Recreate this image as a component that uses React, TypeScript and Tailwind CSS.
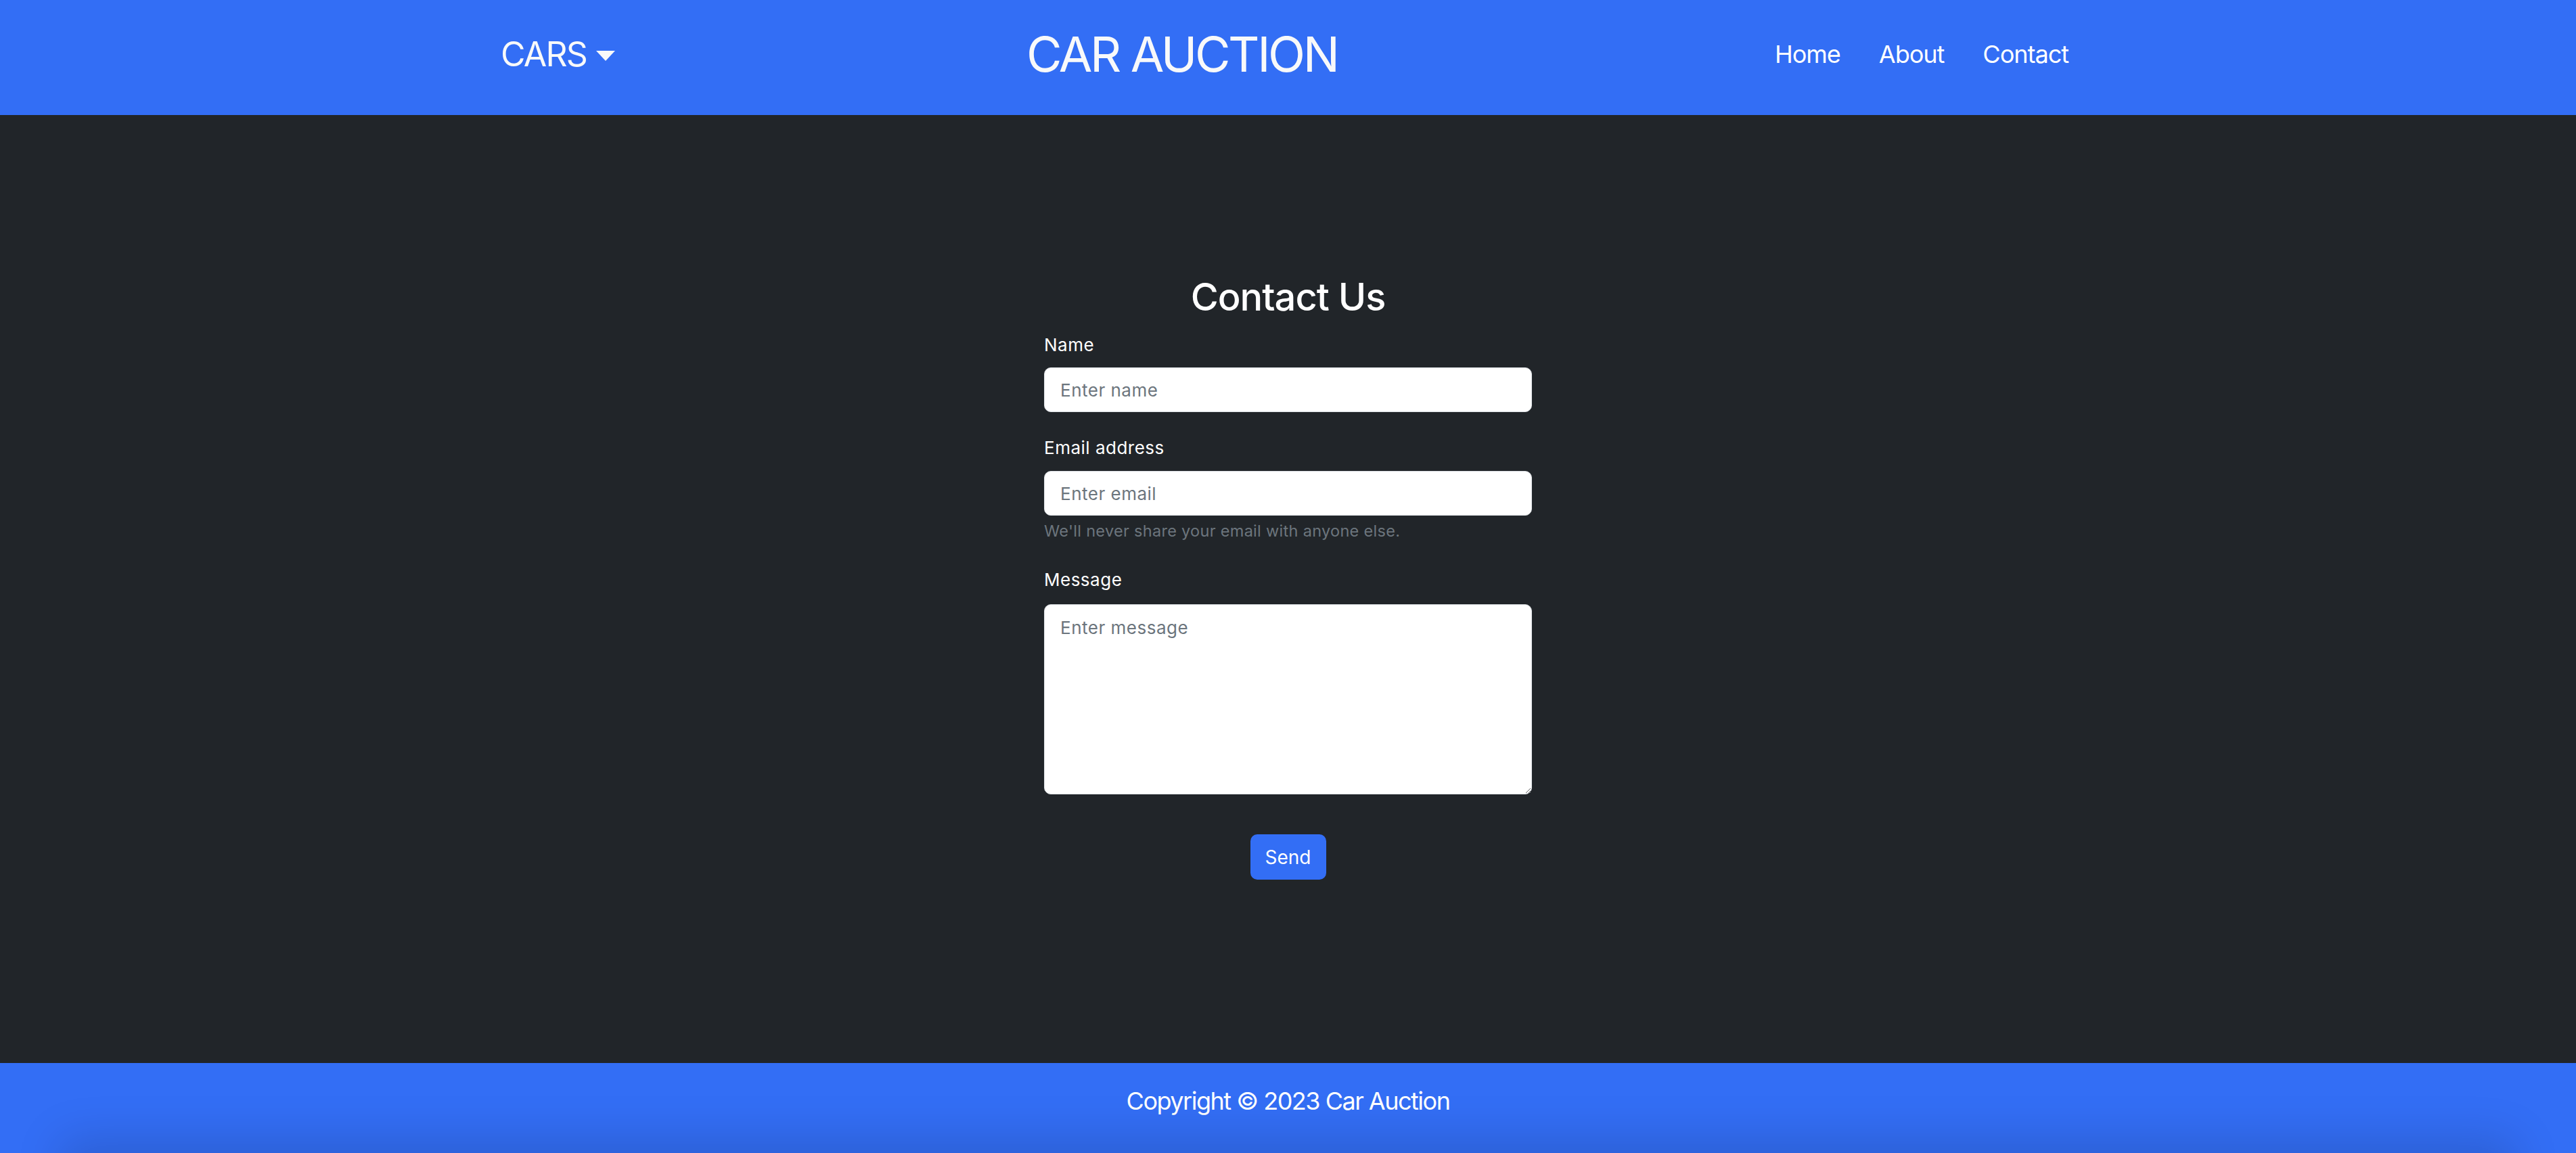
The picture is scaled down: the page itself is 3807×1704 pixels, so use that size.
import React from "react";

export default function App() {
  return (
    <div className="min-h-screen flex flex-col bg-[#212529] font-['Inter','Noto_Sans',sans-serif] text-white">
      <header className="h-[170px] shrink-0 bg-[#336ef5]">
        <div className="w-[2327px] mx-auto h-full flex items-center pr-[10px] pb-[10px]">
          <div className="w-[777px] flex items-center">
            <span className="text-[50px] leading-[60px] text-[#f8f9fa] tracking-[-1.8px]">CARS</span>
            <span className="ml-[14px] mt-[4px] w-0 h-0 border-l-[14.5px] border-r-[14.5px] border-t-[15px] border-l-transparent border-r-transparent border-t-[#f8f9fa]" />
          </div>
          <div className="text-[72px] leading-[86px] text-[#f8f9fa] tracking-[-3.4px]">CAR AUCTION</div>
          <nav className="ml-auto flex items-center gap-[57px] text-[36px] leading-[58px] text-white tracking-[-1px]">
            <a>Home</a>
            <a>About</a>
            <a>Contact</a>
          </nav>
        </div>
      </header>

      <main className="flex-1 flex flex-col items-center pt-[234px]">
        <form className="w-[721px] flex flex-col">
          <h4 className="text-center text-[56px] leading-[70px] font-medium mb-[16px] tracking-[-1px]">Contact Us</h4>

          <label className="text-[26px] leading-[39px] mb-[14px] tracking-[0.5px]">Name</label>
          <input
            type="text"
            placeholder="Enter name"
            className="h-[66px] w-full rounded-[10px] border border-[#dee2e6] bg-white px-[23px] text-[26px] tracking-[0.5px] text-[#212529] placeholder:text-[#6c757d] outline-none"
          />

          <label className="text-[26px] leading-[39px] mt-[33px] mb-[15px] tracking-[0.5px]">Email address</label>
          <input
            type="email"
            placeholder="Enter email"
            className="h-[66px] w-full rounded-[10px] border border-[#dee2e6] bg-white px-[23px] text-[26px] tracking-[0.5px] text-[#212529] placeholder:text-[#6c757d] outline-none"
          />
          <div className="text-[23.5px] leading-[31px] mt-[7px] text-[#6c757d] tracking-[0.3px]">We'll never share your email with anyone else.</div>

          <label className="text-[26px] leading-[39px] mt-[37px] mb-[17px] tracking-[0.5px]">Message</label>
          <textarea
            placeholder="Enter message"
            className="h-[281px] w-full rounded-[10px] border border-[#dee2e6] bg-white px-[23px] py-[14px] text-[26px] leading-[39px] tracking-[0.5px] text-[#212529] placeholder:text-[#6c757d] outline-none"
          />

          <div className="flex justify-center mt-[59px]">
            <button
              type="button"
              className="w-[112px] h-[67px] rounded-[10px] bg-[#336ef5] text-white text-[28px] leading-[40px]"
            >
              Send
            </button>
          </div>
        </form>
      </main>

      <footer className="relative h-[133px] shrink-0 overflow-hidden bg-[#336ef5] text-center pt-[27px]">
        <p className="text-[36px] leading-[58px] text-white tracking-[-1.5px]">Copyright © 2023 Car Auction</p>
        <div className="absolute left-[110px] right-[110px] top-[133px] h-[120px] shadow-[0_0_70px_20px_rgba(0,0,0,0.14)]" />
      </footer>
    </div>
  );
}
